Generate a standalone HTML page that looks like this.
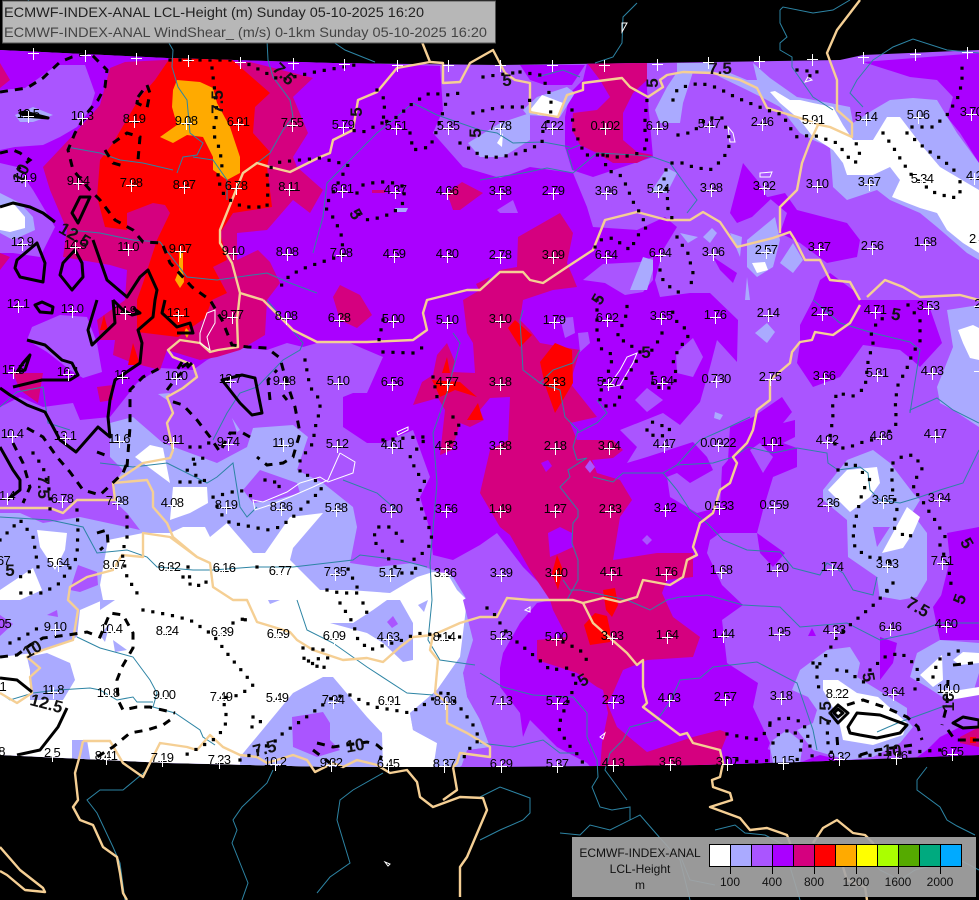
<!DOCTYPE html>
<html><head><meta charset="utf-8"><title>ECMWF-INDEX-ANAL LCL-Height</title>
<style>
html,body{margin:0;padding:0;background:#000;width:979px;height:900px;overflow:hidden}
svg{display:block;font-family:"Liberation Sans",sans-serif}
.v text{font-size:13px;letter-spacing:-.7px;fill:#000;text-anchor:middle}
.b text{font-size:17px;font-weight:bold;fill:#111;text-anchor:middle}
.s{fill:none;stroke:#000;stroke-width:3;stroke-linejoin:round}
.d{fill:none;stroke:#000;stroke-width:3;stroke-dasharray:8 7}
.o{fill:none;stroke:#000;stroke-width:3.2;stroke-dasharray:0 10;stroke-linecap:square}
.r{fill:none;stroke:#2d84a4;stroke-width:1}
.c{fill:none;stroke:#f5cf94;stroke-width:2.4;stroke-linejoin:round}
.w{fill:none;stroke:#fff;stroke-width:1}
.x polyline{fill:none;stroke:none;marker-start:url(#xm);marker-mid:url(#xm);marker-end:url(#xm)}
</style></head><body>
<svg width="979" height="900" viewBox="0 0 979 900" xmlns="http://www.w3.org/2000/svg">
<defs><clipPath id="st"><polygon points="0,50 167,58 333,63 500,65 650,63 840,60 863,55 979,50 979,755 800,762 700,765 500,767 333,767 167,763 0,755"/></clipPath>
<marker id="xm" markerUnits="userSpaceOnUse" markerWidth="16" markerHeight="16" refX="8" refY="8" orient="0" overflow="visible"><path shape-rendering="crispEdges" d="M3 8.5h11M8.5 3v12" fill="none" stroke="#fff" stroke-width="1"/></marker>
</defs>
<rect width="979" height="900" fill="#000"/>
<g clip-path="url(#st)">
<rect width="979" height="900" fill="#aa55ff"/>
<!-- dark purple -->
<g fill="#aa00ff">
<polygon points="0,50 440,66 443,110 433,133 463,167 500,178 530,167 573,173 587,207 593,227 637,230 665,217 677,227 663,250 655,280 660,297 690,293 710,293 738,320 737,362 717,340 710,367 700,402 680,425 663,413 620,430 637,447 627,463 647,457 693,442 707,457 713,470 690,483 677,473 667,477 670,497 697,513 720,507 722,467 728,460 730,427 753,417 782,397 792,412 783,423 795,420 795,437 783,443 797,448 797,467 773,477 763,510 757,533 720,533 710,540 707,553 722,585 743,605 722,620 727,663 758,683 753,707 770,743 760,770 593,770 587,763 557,747 530,720 523,737 520,713 497,683 503,653 520,623 537,603 552,600 543,587 523,567 497,533 480,545 453,560 433,555 430,530 420,497 430,477 413,430 383,443 367,443 343,427 343,397 353,393 367,393 383,357 350,343 317,343 303,347 287,343 267,350 233,347 207,360 193,370 160,368 137,383 110,417 80,420 73,403 43,407 20,397 0,407"/>
<polygon points="587,63 647,63 647,90 653,157 593,177 572,170 565,147 565,117 570,93 583,80"/>
<polygon points="520,65 585,65 572,85 545,85 530,80"/>
<polygon points="713,257 737,273 733,283 720,270"/>
<polygon points="863,62 910,77 937,80 953,97 947,117 960,133 979,163 979,53"/>
<polygon points="730,213 743,163 757,180 767,197 773,197 752,217 737,223"/>
<polygon points="768,197 785,193 797,210 847,223 860,240 857,257 827,263 800,243 780,233 787,213"/>
<polygon points="820,280 830,273 857,293 860,300 927,300 942,343 920,367 910,358 900,350 863,345 840,377 813,387 797,363 800,343 800,325 813,300"/>
<polygon points="947,533 979,527 979,600 940,600 950,560"/>
<polygon points="933,607 947,587 979,580 979,640 940,640"/>
<polygon points="880,637 897,643 893,663 880,680"/>
<polygon points="757,533 785,553 773,567 760,553"/>
<polygon points="940,737 960,727 979,727 979,760 913,760 927,750"/>
<polygon points="727,733 770,750 770,770 720,770"/>
<polygon points="812,628 816,636 808,636"/>
<polygon points="820,755 850,762 780,770"/>
</g>
<!-- magenta -->
<g fill="#d5007f">
<polygon points="110,68 125,62 165,60 250,62 313,78 293,97 308,133 293,157 297,167 323,190 310,213 293,200 267,230 237,233 237,260 258,250 270,262 280,283 267,300 265,335 240,350 217,357 200,360 167,350 160,370 133,363 113,355 115,340 100,340 97,320 125,300 127,270 110,265 63,257 67,230 50,190 43,167 75,133 100,105"/>
<polygon points="97,387 113,385 113,400 100,402"/>
<polygon points="0,63 10,80 0,88"/>
<polygon points="13,373 43,373 38,403 20,390"/>
<polygon points="0,253 10,257 0,270"/>
<polygon points="480,290 487,283 500,270 517,267 518,237 560,213 573,233 567,263 573,277 577,287 553,290 523,300 520,320 530,330 540,343 580,350 570,383 597,417 570,423 577,440 613,440 623,450 613,458 592,460 597,473 620,480 632,500 620,517 613,560 657,553 693,553 693,577 667,580 662,593 673,617 700,637 693,657 647,660 623,670 613,693 607,703 617,727 647,752 693,737 720,730 728,733 720,753 727,770 600,770 602,743 608,713 603,690 597,687 577,673 537,660 537,640 567,637 553,610 550,600 530,570 510,535 500,527 480,493 490,450 508,440 510,397 490,398 480,410 470,395 475,373 473,343 467,333 463,300"/>
<polygon points="447,343 455,362 452,372 475,373 483,388 478,405 484,420 470,427 460,423 452,450 440,455 445,410 438,398 413,405 422,382 433,375 437,355"/>
<polygon points="587,63 647,63 647,80 633,93 623,113 623,140 637,152 653,155 637,163 613,163 597,153 580,145 572,130 573,113 597,110 610,97 600,80"/>
<polygon points="447,193 462,182 483,193 460,210 453,210"/>
<polygon points="333,297 340,285 360,295 372,315 357,328 340,320"/>
<polygon points="372,190 385,190 385,193 372,193"/>
<polygon points="476,284 490,277 480,292"/>
<polygon points="960,737 979,727 979,747 960,743"/>
</g>
<!-- dark pockets above magenta -->
<g fill="#aa00ff">
<polygon points="548,533 560,527 572,533 573,547 560,553 550,557"/>
<polygon points="541,463 548,460 552,466 546,472"/>
</g>
<!-- red -->
<g fill="#f00">
<polygon points="170,58 230,58 270,93 255,107 253,133 270,152 267,167 272,207 233,213 220,233 227,260 213,267 227,293 212,300 205,318 178,337 137,332 137,300 143,283 157,240 170,213 165,205 153,203 127,213 127,230 105,227 97,197 100,160 113,143 140,97 155,80"/>
<polygon points="128,365 133,343 140,365"/>
<polygon points="100,330 104,315 108,330"/>
<polygon points="508,328 515,320 532,335 520,347"/>
<polygon points="540,362 555,343 572,350 573,383 555,413 545,385"/>
<polygon points="442,373 447,357 450,373"/>
<polygon points="432,380 460,382 477,397 455,390 440,397"/>
<polygon points="467,420 478,403 483,420"/>
<polygon points="552,573 557,555 563,570 558,590"/>
<polygon points="603,590 615,588 618,605 612,617 606,610"/>
<polygon points="584,625 595,613 607,616 610,630 610,642 590,645"/>
<polygon points="970,737 976,737 976,743 970,743"/>
</g>
<!-- orange -->
<g fill="#ffaa00">
<polygon points="177,80 200,82 213,88 217,103 230,127 240,157 240,173 227,180 213,170 213,157 203,137 187,135 173,143 160,137 177,125 172,107 173,90"/>
<polygon points="179,252 183,252 183,270 184,282 180,288 175,280 179,270"/>
<polygon points="186,328 190,332 187,338 184,333"/>
</g>
<!-- mid pockets -->
<g fill="#aa55ff">
<polygon points="0,90 25,88 57,65 85,65 95,93 90,110 77,127 60,137 43,145 15,147 0,150"/>
<polygon points="0,163 17,167 33,190 55,227 40,257 13,253 0,253"/>
<polygon points="32,327 60,315 87,317 97,343 102,372 83,378 70,370 47,352 27,340"/>
<polygon points="497,210 513,200 518,213 500,213"/>
<polygon points="590,207 603,187 613,197 610,217 593,220"/>
<polygon points="583,280 603,264 640,262 653,257 653,280 643,292 625,295 605,283"/>
<polygon points="560,318 573,317 575,333 565,338"/>
<polygon points="578,333 588,332 590,343 580,352"/>
<polygon points="676,353 693,338 703,357 693,377 677,373"/>
<polygon points="635,400 647,388 663,400 647,412"/>
<polygon points="750,450 763,473 773,457 760,443"/>
<polygon points="585,467 590,460 595,467 590,473"/>
<polygon points="642,540 647,535 652,540 647,545"/>
</g>
<!-- light -->
<g fill="#aaaaff">
<polygon points="0,513 20,513 43,523 80,517 140,530 127,513 113,500 115,483 123,470 110,457 110,423 133,417 163,443 217,463 247,447 253,428 293,425 308,437 297,470 323,483 353,507 357,527 350,563 377,567 413,563 453,577 467,600 473,627 473,650 463,673 467,697 480,720 490,747 467,750 460,770 0,770"/>
<polygon points="15,115 33,107 53,115 33,122 20,122"/>
<polygon points="0,193 20,203 33,217 35,230 13,240 0,233"/>
<polygon points="713,72 730,73 747,80 757,80 753,63 770,78 797,97 830,103 850,107 853,123 873,110 890,100 913,98 937,100 957,133 979,163 979,260 967,253 937,227 920,213 890,200 877,190 847,200 833,187 830,147 813,140 800,133 780,107 767,100 747,90 720,77"/>
<polygon points="655,110 667,87 677,72 677,63 713,63 713,72 693,72 683,103 680,123 660,123"/>
<polygon points="523,110 537,97 567,87 575,93 560,117 527,115"/>
<polygon points="468,143 500,123 530,113 530,140 503,157 480,157"/>
<polygon points="650,193 667,168 677,173 667,193"/>
<polygon points="680,233 698,237 688,243"/>
<polygon points="703,237 712,228 717,233 710,243"/>
<polygon points="730,233 742,237 740,257"/>
<polygon points="747,240 775,217 780,240 773,267 757,277 747,267"/>
<polygon points="780,263 793,243 803,260 793,273"/>
<polygon points="630,290 643,257 653,260 653,270 647,290"/>
<polygon points="745,300 747,277 750,300"/>
<polygon points="937,387 953,347 947,310 979,305 979,427 953,410 940,403"/>
<polygon points="755,333 767,323 775,332 767,343"/>
<polygon points="823,490 847,460 873,450 890,463 913,493 920,500 912,513 927,533 927,580 917,597 900,600 883,597 880,600 877,577 848,557 847,520 823,500"/>
<polygon points="792,690 800,670 827,650 850,647 860,663 857,677 883,693 907,708 907,720 913,727 900,743 873,757 847,760 813,750 797,730 813,723 817,710 808,697"/>
<polygon points="770,747 773,740 787,730 803,743 800,763 773,763"/>
<polygon points="910,677 917,653 940,640 979,643 979,673 973,693 953,690 947,700 927,687"/>
<polygon points="715,412 723,415 720,420 714,418"/>
<polygon points="395,208 408,208 406,212 396,212"/>
<polygon points="158,394 170,393 167,400"/>
<polygon points="232,418 240,430 237,432"/>
</g>
<!-- white -->
<g fill="#fff">
<polygon points="0,657 33,653 77,637 80,610 103,600 100,585 108,540 143,533 170,533 183,527 205,527 210,537 227,523 253,553 265,553 290,517 323,513 293,548 290,560 320,590 350,590 390,593 417,577 433,572 447,573 457,590 467,600 463,633 460,657 437,690 410,713 413,730 437,743 433,770 0,770"/>
<polygon points="770,92 775,91 790,100 800,100 813,103 833,107 843,125 853,140 873,140 887,117 900,117 923,147 940,167 979,190 979,253 963,243 947,230 937,213 920,208 907,203 892,197 900,180 890,167 873,175 847,175 843,163 833,150 813,137 800,120 780,103"/>
<polygon points="530,110 542,95 550,98 563,103 557,117 538,115"/>
<polygon points="497,143 503,133 502,147"/>
<polygon points="752,263 765,262 768,270 757,273"/>
<polygon points="958,330 973,325 979,328 979,360 970,358 963,343"/>
<polygon points="828,490 847,470 877,467 880,483 870,497 850,512"/>
<polygon points="882,553 907,507 920,517 913,533 903,548"/>
<polygon points="823,680 838,680 857,693 878,697 907,723 903,735 873,745 843,740 838,717 823,690"/>
<polygon points="920,675 942,655 943,680 933,687"/>
<polygon points="953,660 963,652 979,653 979,663 960,665"/>
<polygon points="938,690 960,690 979,687 979,695 950,700"/>
<polygon points="0,207 13,203 25,217 25,228 10,232 0,230"/>
<polygon points="135,457 150,445 163,448 170,483 143,463"/>
<polygon points="173,487 207,487 208,503 190,513 170,520"/>
<polygon points="37,530 67,533 65,550 55,570 40,547"/>
<polygon points="0,590 33,568 42,590 20,600 0,605"/>
</g>
<!-- patches on white -->
<g fill="#aaaaff">
<polygon points="0,600 68,600 77,610 73,640 43,650 27,653 0,657"/>
<polygon points="27,657 47,653 70,663 75,680 63,700 30,700 30,670"/>
<polygon points="330,623 353,623 373,610 387,600 400,600 413,623 413,660 403,662 383,643 367,633"/>
<polygon points="240,757 293,693 323,677 333,677 367,717 382,733 383,770 240,770"/>
<polygon points="72,740 87,740 92,770 72,770"/>
<polygon points="100,635 110,623 105,642"/>
<polygon points="113,640 127,650 115,652"/>
<polygon points="410,713 437,690 460,657 467,697 480,720 490,747 467,750 460,770 437,770 437,743 413,730"/>
<polygon points="100,600 115,600 100,610"/>
<polygon points="268,600 280,600 270,604"/>
<polygon points="418,605 428,600 424,612"/>
</g>
<g fill="#aa55ff">
<polygon points="243,490 260,470 297,483 300,493 275,500 253,503"/>
<polygon points="70,590 78,565 97,572 98,585 80,592"/>
<polygon points="292,717 323,712 330,723 330,740 340,750 317,757 293,747"/>
<polygon points="0,615 13,624 0,636"/>
<polygon points="387,622 393,616 398,624 392,628"/>
<polygon points="873,527 890,527 877,547"/>
<polygon points="463,600 480,590 500,600 500,770 455,770 490,747 480,720 463,673 473,640"/>
<polygon points="47,615 57,610 58,617" />
</g>
</g>

<!-- rivers -->
<g class="r">
<polyline points="163,33 173,50 172,67 178,87 187,100 190,133 203,143 197,155 183,157 177,173"/>
<polyline points="267,40 268,60 273,77 290,100 293,117 283,130 270,153 257,163"/>
<polyline points="413,103 437,115 460,123 480,130 497,133 513,143 543,142 570,147"/>
<polyline points="413,103 393,120 377,133 350,160 327,183 323,217 313,253"/>
<polyline points="193,157 213,160 227,180 227,200"/>
<polyline points="67,147 100,153 120,160 143,163 173,170"/>
<polyline points="70,230 100,233 133,240 160,242 187,277 217,280 267,273 290,283 317,293"/>
<polyline points="480,180 523,173 547,168 573,173 597,153 637,155 653,157 670,163 687,187 697,200 687,213"/>
<polyline points="580,145 567,150 573,170"/>
<polyline points="637,3 623,17 622,43 613,57 595,63"/>
<polyline points="780,10 783,7 813,13 833,10 850,0"/>
<polyline points="780,10 780,23 787,37 780,43 780,50 792,57 792,67 813,97 833,110"/>
<polyline points="979,53 947,50 913,39 893,47 873,60 857,80 850,93 863,107"/>
<polyline points="537,77 563,70 580,77"/>
<polyline points="523,310 520,320 523,370 540,383 560,390 565,417 578,430 573,447 577,460 587,458 568,470 570,477 560,487 578,510 578,517 573,523 572,543 578,560 578,580 567,600"/>
<polyline points="540,383 553,370 573,363 580,350"/>
<polyline points="597,400 607,413 597,423 577,433"/>
<polyline points="593,477 613,482 623,473 663,473 677,465 713,463 733,457 748,447 773,453 797,448 827,453 828,463 838,470 860,467 868,473 870,490 880,500 900,503 920,497 940,490 963,483 979,450"/>
<polyline points="677,465 693,447 700,440 727,428 750,417"/>
<polyline points="663,473 677,490 690,510 707,523 723,540 747,550 780,552 793,568 820,575 827,563 843,573 853,590 873,595 877,577"/>
<polyline points="910,413 910,410 937,398 953,410 979,423"/>
<polyline points="910,413 920,350 910,342 873,333 840,323 813,300"/>
<polyline points="480,673 503,687 533,695 573,697 587,713 587,737 597,760 598,777 592,787 600,807 612,810 630,807 630,820"/>
<polyline points="563,580 570,590 580,590 627,600 650,610 667,600 680,597 707,595 743,605 780,607 800,627 847,623 880,640 913,633 940,623 979,623"/>
<polyline points="630,727 623,740 610,753 605,770 627,800"/>
<polyline points="630,727 657,720 670,702 680,680 700,678 713,667 757,662 797,683 813,730 817,750"/>
<polyline points="877,732 900,722 928,712 947,705"/>
<polyline points="480,743 513,747 543,740 560,753 580,753"/>
<polyline points="927,767 917,780 917,790 940,807 947,820 957,826 975,835"/>
<polyline points="480,797 500,787 530,798 530,813 523,820 500,830 480,840"/>
<polyline points="273,770 267,783 242,807 233,820 237,830 232,843 240,863 248,883 242,900"/>
<polyline points="383,773 353,790 340,800 337,820 343,840 350,863 330,877 317,893"/>
<polyline points="147,770 123,790 100,790 87,800 97,813 113,847 120,863 125,900"/>
<polyline points="297,600 307,630 333,643 367,667 407,693 433,695"/>
<polyline points="77,637 100,648 133,657 150,680 157,693 153,707 175,713 200,730 203,737 215,745"/>
<polyline points="0,693 10,700 33,693 58,690 90,688 100,690 117,700 133,697 137,702 153,702"/>
<polyline points="0,407 17,392 43,387 48,423 70,430"/>
<polyline points="100,463 133,467 167,463 207,483 217,477 233,463 240,507 247,517 257,507"/>
<polyline points="213,440 227,413 240,393 257,387 283,360 300,350 303,343 267,300"/>
<polyline points="343,480 377,493 400,513"/>
<polyline points="453,333 460,343 447,393 433,433 437,483 430,563 432,600 428,640 440,660 475,665"/>
<polyline points="0,517 50,520 83,527 97,553 127,550 147,557 157,567 193,570 213,570 253,567 293,567 353,560 360,555 400,560 427,567"/>
<polyline points="28,0 40,12 100,15 125,40 150,40"/>
<polyline points="320,33 345,50 375,62"/>
<polyline points="715,830 735,825 745,833 765,835 790,848 785,850 800,900"/>
<polyline points="560,833 580,835 590,825 610,830 640,815 660,838 680,860 690,900"/>
<polyline points="860,850 880,870 900,880 915,870 935,865 960,860 979,870"/>
<polyline points="715,885 690,880 680,855"/>
</g>
<!-- borders -->
<g class="c">
<polyline points="420,37 430,62 397,68 377,92 358,100 353,130 333,140 330,153 320,157 290,172 270,167 257,163 243,173 232,200 220,230 220,243 232,263 240,293 237,320 238,347 218,350 210,352 200,343 180,340 168,350 173,357 193,365 197,377 183,388 167,397 173,413 167,423 173,450 170,458 143,463 113,483 115,500 77,500 63,513 50,508 0,508"/>
<polyline points="430,62 443,63 443,83 460,82 470,63 493,50 505,73 515,80 530,83 530,112 558,117 567,95 583,90 583,83 622,78 630,87 648,97 663,87 660,80 667,75 683,72 713,73 740,80 757,88 767,108 800,118 820,125 830,127 852,137 852,123 837,110 837,80 827,53 837,30 860,0"/>
<polyline points="263,300 293,330 317,342 367,342 413,340 427,330 423,313 427,300 467,290 480,290 500,272 523,272 530,280 543,283 567,267 593,250 605,220 637,212 667,220 690,220 703,212 720,222 737,247 773,238 790,232 795,240 805,260 820,260 830,280 850,282 860,300"/>
<polyline points="240,293 263,300"/>
<polyline points="867,297 885,280 903,287 920,297 960,295 979,300"/>
<polyline points="780,233 780,207 797,190 802,163 810,142 818,125"/>
<polyline points="860,305 850,323 833,335 815,332 812,340 800,342 792,352 790,363 770,380 770,400 757,410 753,430 747,443 733,457 737,463 730,483 720,490 713,513 700,523 693,547 697,555 687,560 683,577 670,585 643,580 637,597 620,602 603,598 583,603 573,600 557,600 530,600 507,598 497,617 480,617 460,623 433,635 413,637 400,647 383,662 367,658 343,660 313,650 297,640 290,632 257,622 247,600 233,600 213,587 210,563 197,557 170,537 143,533 143,557 122,555 113,570 87,577 70,587 68,600 78,610 73,640 43,650 27,657 40,668 30,677 32,693 17,703 0,693"/>
<polyline points="113,483 147,480 153,492 153,507 167,523 173,537 197,557"/>
<polyline points="83,741 110,741 123,763 143,777 160,743 187,747 197,750 210,735 223,747 240,755 257,757 267,763 293,755 307,760 315,772 333,763 343,767 357,760 377,765 390,773 407,770 417,782 420,797 433,807 460,797 483,798 487,810 467,857 460,867 460,897"/>
<polyline points="83,741 80,755 75,773 78,800 73,807 80,820 93,825 103,847 117,857 120,873 123,893 127,900"/>
<polyline points="0,847 20,870 43,888 45,892 25,890 13,880 7,875 0,871"/>
<polyline points="447,713 447,723 467,733 490,747 490,757 460,753 457,763 453,767 457,790 443,800"/>
<polyline points="433,635 430,650 438,660 435,693 447,703 447,713"/>
<polyline points="583,603 593,623 627,653 637,665 643,660 643,687 647,703 643,707 680,735 687,733 693,743 720,750 723,763 720,777 712,780 713,787 730,793 732,800 710,807 740,818 750,830 767,828 787,835 790,843 795,865"/>
<polyline points="813,843 823,828 837,820 853,833 865,835 873,843 876,850"/>
<polyline points="843,867 847,880 865,887 867,900"/>
</g>
<g class="w">
<polyline points="340,453 355,462 353,473 328,482 320,477 300,483 287,492 263,502 253,500 255,510 270,505 290,497 313,487 328,480 340,453"/>
<polygon points="200,333 207,313 215,310 215,323 207,337 210,350 200,343"/>
<polygon points="397,432 408,427 408,430 398,435"/>
<polygon points="620,370 627,357 637,353 633,363 627,373 620,385 608,387"/>
<polygon points="760,173 772,172 770,177 760,177"/>
<polygon points="728,127 733,133 735,142 730,142"/>
<polygon points="622,23 627,23 622,32"/>
<polygon points="808,77 812,80 805,82"/>
<polygon points="525,610 530,607 530,612"/>
<polygon points="600,737 605,733 603,739"/>
<polygon points="385,862 390,864 388,866"/>
</g>
<!-- contours -->
<g clip-path="url(#st)">
<g class="d">
<polyline points="0,92 27,88 43,78 60,62 72,57 90,53 102,65 107,70 105,87 98,100 87,113 75,133 68,150 73,170 90,190 100,200 115,220 133,230 143,242 162,243 170,263 192,287 210,300 222,320 232,345 248,347 267,348 280,358 286,380 295,407 300,433 293,457 283,463 267,465 257,457"/>
<polyline points="250,437 243,433 230,433 220,452 210,437 197,420 183,405 167,400"/>
<polygon points="138,97 147,85 150,93 147,108 137,103"/>
<polyline points="113,143 127,133 140,137 138,160"/>
<polyline points="105,150 113,163 127,167"/>
<polyline points="0,153 13,150 20,153 30,160 17,170"/>
<polyline points="127,467 130,427 130,390 143,377 160,368"/>
<polyline points="167,390 177,377 192,363"/>
<polyline points="182,362 177,370 190,362"/>
<polyline points="27,428 43,437 57,457 70,472 83,490 100,495 123,473 127,463"/>
<polyline points="13,443 23,463 30,487 23,503"/>
<polyline points="270,400 268,380 277,370"/>
<polyline points="283,395 287,400"/>
<polyline points="97,533 107,530 108,543 100,550"/>
<polyline points="97,452 105,455 103,458"/>
<polyline points="0,657 17,655 30,645 43,638 68,635 87,632 100,637 110,613 123,615 133,633 133,648 122,667 117,680 118,700 123,710 137,707 150,707 175,713"/>
<polyline points="170,720 163,725 147,730 130,733 113,747 97,757"/>
<polyline points="317,743 333,747 367,742 377,745 383,750 380,760"/>
<polyline points="313,750 330,763"/>
<polyline points="847,705 863,700 887,708 907,717 918,727 922,740"/>
<polyline points="837,737 838,750"/>
<polyline points="860,755 877,750 913,745"/>
<polyline points="948,680 947,705 942,725"/>
<polyline points="948,730 955,740 979,740"/>
<polyline points="953,665 973,663"/>
</g>
<g class="s">
<polyline points="0,207 13,203 30,207 43,213 55,222"/>
<polygon points="17,260 37,243 45,263 43,282 20,277 15,268"/>
<polygon points="80,197 90,197 78,223 72,213"/>
<polygon points="75,250 82,263 83,277 72,290 60,275 63,263"/>
<polyline points="93,240 100,260 107,280 127,297 140,277 148,270 157,290 155,300 153,317 138,330 142,343 140,363 115,380 110,400 108,417 110,437 98,427 76,452 60,440 45,412 27,405 10,395 0,388"/>
<polyline points="97,300 88,330 92,345 115,323 113,300"/>
<polyline points="113,300 123,310 132,315 140,313 133,308"/>
<polyline points="165,300 162,313 177,327 190,323 193,333 177,333"/>
<polygon points="35,305 42,302 53,307 52,313 40,312"/>
<polyline points="27,340 45,345 62,360 72,363 78,375 70,380 42,380 13,387"/>
<polygon points="23,363 30,355 25,370 17,372"/>
<polygon points="222,380 242,375 255,378 262,413 252,415 240,403"/>
<polyline points="0,447 13,470 20,480 20,490 7,500"/>
<polyline points="0,678 17,680 32,692"/>
<polyline points="67,708 58,727 40,750 17,755"/>
<polygon points="857,713 880,715 907,725 900,733 877,738 860,735 850,733 848,727"/>
<polygon points="830,713 838,705 848,713 838,723"/>
<polygon points="834,713 838,709 843,713 838,717"/>
<polygon points="953,723 963,717 979,720 979,727 963,728"/>
<polygon points="48,118 25,116 20,113 25,112" fill="#000"/>
</g>
<g class="o">
<polyline points="170,60 240,60 280,80 315,72 355,65"/>
<polyline points="212,68 215,93 217,113 213,133 220,150 222,167 217,177 223,193 230,200 243,207 267,207 268,190 267,170 280,162 320,158 340,163 348,165 325,207 335,220 342,237 343,255 307,267 290,275 280,287"/>
<polyline points="357,193 363,185 377,182 390,182 405,187 403,203 393,213 378,218 368,220 357,213"/>
<polyline points="377,90 385,100 383,123 397,117 413,103 430,93 447,95 460,93"/>
<polyline points="410,133 413,150 430,147 437,130 447,100"/>
<polyline points="382,123 363,132 350,130"/>
<polyline points="473,113 500,107 523,107 530,100"/>
<polyline points="460,143 480,155 490,158 513,155 532,148 542,143 543,130"/>
<polyline points="483,77 497,75 513,73"/>
<polyline points="520,72 540,75 548,88 552,107 548,122"/>
<polyline points="572,110 573,128 585,155 603,155 613,157 623,157 643,152 648,143 645,137 645,118 647,100"/>
<polyline points="603,155 607,170 620,175 625,183 629,192 632,200 640,213 647,227 640,232 630,250 613,238 600,240 593,250"/>
<polyline points="673,100 677,90 683,87 700,83 718,88 735,97 747,102 767,110 783,115 788,125 797,137 813,135 837,143 848,157 855,163 860,155 855,140"/>
<polyline points="678,135 693,132 707,118 722,118 728,133 730,143 727,152 722,160 710,170 693,167 683,163 670,163 663,175 667,190 668,210 673,220"/>
<polyline points="883,133 893,147 903,163 913,177 933,192 952,198 960,195 960,180"/>
<polyline points="907,133 927,150 943,160 957,173"/>
<polyline points="912,127 933,127 947,115 952,107 957,100 962,83 962,67"/>
<polyline points="797,70 818,72 805,78"/>
<polyline points="677,237 680,243 687,250 693,273 690,290"/>
<polyline points="660,270 663,280 670,287 680,293"/>
<polyline points="597,300 597,332 600,348 613,355 610,368 603,383 600,395 600,403 610,408 618,403 623,383 627,377 637,360 640,352 627,343 617,337 623,323 627,313 627,305"/>
<polyline points="652,373 653,387 670,388 677,378 673,360 680,347 688,338 687,330 677,322 673,313 670,305"/>
<polyline points="662,333 657,343 647,357"/>
<polygon points="647,430 652,422 660,425 670,428 668,433 660,437 652,435"/>
<polyline points="908,305 920,320 920,343 913,352 910,360 907,368 897,387 895,410 897,420 895,427 880,438 863,442 847,448 838,448 830,437 833,417 832,408 837,393 853,396 865,388 868,362 873,343 870,337 878,320 888,317"/>
<polyline points="838,470 848,463 855,465 870,480 863,490 857,513 853,533 855,548 868,557 880,558 897,565"/>
<polyline points="893,583 883,597"/>
<polyline points="893,463 903,456 913,455 923,467 915,480 913,490 920,497 928,510 935,520 947,540"/>
<polyline points="892,470 892,487 897,510 893,527 907,538 915,533"/>
<polyline points="813,663 817,667 823,660 837,637 850,625 877,602 893,583"/>
<polyline points="817,667 817,680 820,693"/>
<polyline points="837,670 845,670 857,678 872,687"/>
<polyline points="870,670 885,657 900,653 908,658 917,667 918,680 913,695"/>
<polyline points="933,677 938,660 953,652 963,650"/>
<polyline points="770,723 783,717 803,722 808,737 813,760"/>
<polyline points="773,743 780,732 793,730 803,743 797,760"/>
<polyline points="828,723 827,740 833,757"/>
<polyline points="727,734 743,737 755,740 765,733 770,725"/>
<polyline points="727,758 750,762 775,760"/>
<polyline points="517,642 543,663 550,670 568,668 577,680 573,690 563,713 558,727 567,743 578,755 583,763"/>
<polyline points="563,642 580,650 590,665"/>
<polyline points="487,608 495,615 500,623 510,637"/>
<polyline points="860,756 940,750"/>
<polyline points="940,545 948,565 952,590"/>
<polyline points="305,360 310,387 320,400 320,410 315,428 313,443 300,460 300,473 313,477 322,490 310,500 293,517 280,527 267,530 243,525 230,523 220,513 213,497 240,490 253,497"/>
<polyline points="180,482 207,482 187,470 203,458 187,460"/>
<polyline points="190,447 203,447 213,440"/>
<polyline points="265,480 270,482 280,482 278,492"/>
<polyline points="383,352 413,353 430,343"/>
<polyline points="383,440 417,437 427,437 410,457 417,473 425,480 417,497 427,523 430,530 432,540 427,550 413,560 417,573 400,573 380,548 373,540 377,527 390,527 400,537 405,547"/>
<polyline points="433,377 437,397 440,403"/>
<polyline points="453,417 460,427 450,443"/>
<polyline points="383,320 378,345"/>
<polyline points="33,453 43,467 50,493 50,510"/>
<polyline points="77,510 78,527 77,557 60,583 43,593 17,593"/>
<polyline points="127,517 127,537 122,553 127,577 137,593"/>
<polyline points="0,540 20,520 33,537 38,567 20,577"/>
<polyline points="183,577 193,587 207,583 200,577"/>
<polyline points="257,567 253,573"/>
<polyline points="327,590 340,593 360,593 347,567"/>
<polyline points="143,610 170,615 190,620 213,635 230,657 247,677 253,685 240,695 223,698 227,720 223,730 213,740 200,747 190,753 180,757"/>
<polyline points="10,643 23,637 43,625"/>
<polyline points="233,623 248,617 240,625"/>
<polyline points="303,648 323,650 315,665 302,657 323,670 328,657"/>
<polyline points="340,603 353,623 358,640 370,650 378,647 403,640 413,635 422,633 447,637 460,637"/>
<polyline points="363,603 367,613 375,610"/>
<polyline points="253,717 252,727 263,720"/>
<polyline points="240,760 250,755 277,740 283,733 298,723 312,713 320,707 333,697 350,695 360,700 375,707 393,710 410,713 427,703 445,690 462,710 473,725 480,740 472,745 462,760"/>
<polyline points="188,567 190,580"/>
</g>
</g>
<!-- values -->
<g class="v">
<text x="28" y="118">12.5</text><text x="82" y="120">10.3</text><text x="134" y="123">8.19</text><text x="186" y="125">9.08</text><text x="238" y="126">6.91</text><text x="292" y="127">7.55</text><text x="343" y="129">5.79</text><text x="396" y="130">5.51</text><text x="448" y="130">5.35</text><text x="500" y="130">7.78</text><text x="552" y="130">4.22</text><text x="605" y="130">0.102</text><text x="657" y="130">6.19</text><text x="709" y="128">5.47</text><text x="762" y="126">2.46</text><text x="813" y="124">5.91</text><text x="866" y="121">5.14</text><text x="918" y="119">5.06</text><text x="971" y="116">3.70</text>
<text x="25" y="182">10.9</text><text x="78" y="185">9.64</text><text x="131" y="187">7.98</text><text x="184" y="189">8.97</text><text x="236" y="190">6.78</text><text x="289" y="191">8.11</text><text x="342" y="193">6.81</text><text x="395" y="194">4.37</text><text x="447" y="195">4.66</text><text x="500" y="195">3.58</text><text x="553" y="195">2.79</text><text x="606" y="195">3.96</text><text x="658" y="193">5.24</text><text x="711" y="192">3.98</text><text x="764" y="190">3.92</text><text x="817" y="188">3.10</text><text x="869" y="186">3.67</text><text x="922" y="183">5.34</text><text x="974" y="180">4.2</text>
<text x="22" y="246">12.9</text><text x="75" y="249">14.5</text><text x="128" y="251">11.0</text><text x="180" y="253">9.07</text><text x="233" y="255">9.10</text><text x="287" y="256">8.08</text><text x="341" y="257">7.08</text><text x="394" y="258">4.59</text><text x="447" y="258">4.30</text><text x="500" y="259">2.78</text><text x="553" y="259">3.09</text><text x="606" y="259">6.84</text><text x="660" y="257">6.94</text><text x="713" y="256">3.06</text><text x="766" y="254">2.57</text><text x="819" y="251">3.37</text><text x="872" y="250">2.56</text><text x="925" y="246">1.68</text><text x="977" y="243">2.4</text>
<text x="18" y="308">12.1</text><text x="72" y="313">13.0</text><text x="125" y="315">14.9</text><text x="178" y="317">13.1</text><text x="232" y="319">9.77</text><text x="286" y="320">8.08</text><text x="339" y="322">6.28</text><text x="393" y="323">5.00</text><text x="447" y="324">5.10</text><text x="500" y="323">3.10</text><text x="554" y="324">1.79</text><text x="607" y="322">6.92</text><text x="661" y="320">3.65</text><text x="715" y="319">1.76</text><text x="768" y="317">2.14</text><text x="822" y="316">2.75</text><text x="875" y="314">4.71</text><text x="928" y="310">3.53</text><text x="979" y="308">2.</text>
<text x="13" y="374">15.5</text><text x="68" y="376">16.1</text><text x="122" y="379">12.</text><text x="176" y="380">10.0</text><text x="230" y="383">12.7</text><text x="284" y="385">9.98</text><text x="338" y="385">5.10</text><text x="392" y="386">6.56</text><text x="447" y="386">4.77</text><text x="500" y="386">3.18</text><text x="554" y="386">2.33</text><text x="608" y="386">5.27</text><text x="662" y="385">5.84</text><text x="716" y="383">0.730</text><text x="770" y="381">2.75</text><text x="824" y="380">3.66</text><text x="877" y="377">5.81</text><text x="932" y="375">4.03</text>
<text x="12" y="438">10.4</text><text x="65" y="440">13.1</text><text x="119" y="443">11.6</text><text x="173" y="444">9.11</text><text x="228" y="446">9.74</text><text x="283" y="447">11.9</text><text x="337" y="448">5.12</text><text x="392" y="449">4.61</text><text x="446" y="450">4.33</text><text x="500" y="450">3.38</text><text x="555" y="450">2.18</text><text x="609" y="450">3.04</text><text x="664" y="448">4.47</text><text x="718" y="447">0.0922</text><text x="772" y="446">1.01</text><text x="827" y="444">4.92</text><text x="881" y="440">4.86</text><text x="935" y="438">4.17</text>
<text x="7" y="500">1.4</text><text x="62" y="503">6.78</text><text x="117" y="505">7.98</text><text x="172" y="507">4.08</text><text x="226" y="509">8.19</text><text x="281" y="511">8.86</text><text x="336" y="512">5.88</text><text x="391" y="513">6.20</text><text x="446" y="513">3.56</text><text x="500" y="513">1.49</text><text x="555" y="513">1.27</text><text x="610" y="513">2.83</text><text x="665" y="512">3.42</text><text x="719" y="510">0.533</text><text x="774" y="509">0.959</text><text x="828" y="507">2.36</text><text x="883" y="504">3.65</text><text x="939" y="502">3.94</text>
<text x="2" y="565">.67</text><text x="58" y="567">5.64</text><text x="114" y="569">8.07</text><text x="169" y="571">6.82</text><text x="224" y="572">6.16</text><text x="280" y="575">6.77</text><text x="335" y="576">7.35</text><text x="390" y="577">5.17</text><text x="445" y="577">3.36</text><text x="501" y="577">3.39</text><text x="556" y="577">3.40</text><text x="611" y="576">4.51</text><text x="666" y="576">1.76</text><text x="721" y="574">1.68</text><text x="777" y="572">1.20</text><text x="832" y="571">1.74</text><text x="887" y="568">3.93</text><text x="942" y="565">7.51</text>
<text x="3" y="628">.05</text><text x="55" y="631">9.10</text><text x="111" y="633">10.4</text><text x="167" y="635">8.24</text><text x="222" y="636">6.39</text><text x="278" y="638">6.59</text><text x="334" y="640">6.09</text><text x="388" y="641">4.63</text><text x="444" y="641">8.14</text><text x="501" y="640">5.23</text><text x="556" y="641">5.00</text><text x="612" y="640">3.93</text><text x="667" y="639">1.64</text><text x="723" y="638">1.44</text><text x="779" y="636">1.95</text><text x="834" y="634">4.33</text><text x="890" y="631">6.46</text><text x="946" y="628">4.60</text>
<text x="0" y="691">11</text><text x="53" y="694">11.8</text><text x="108" y="697">10.8</text><text x="164" y="699">9.00</text><text x="221" y="701">7.49</text><text x="277" y="702">5.49</text><text x="333" y="704">7.94</text><text x="389" y="705">6.91</text><text x="445" y="705">8.08</text><text x="501" y="705">7.13</text><text x="557" y="705">5.72</text><text x="613" y="704">2.73</text><text x="669" y="702">4.03</text><text x="725" y="701">2.57</text><text x="781" y="700">3.18</text><text x="837" y="698">8.22</text><text x="893" y="696">3.64</text><text x="948" y="693">10.0</text>
<text x="0" y="756">.8</text><text x="52" y="757">2.5</text><text x="106" y="760">8.41</text><text x="162" y="762">7.19</text><text x="219" y="764">7.23</text><text x="275" y="766">10.2</text><text x="331" y="767">9.82</text><text x="388" y="768">6.45</text><text x="444" y="768">8.37</text><text x="501" y="768">6.29</text><text x="557" y="768">5.37</text><text x="613" y="767">4.13</text><text x="670" y="766">3.56</text><text x="727" y="766">3.07</text><text x="783" y="765">1.15</text><text x="839" y="761">9.32</text><text x="896" y="760">7.96</text><text x="952" y="756">6.75</text>
</g>
<g class="b">
<text transform="translate(280,78) rotate(45)">7.5</text>
<text transform="translate(223,102) rotate(-90)">7.5</text>
<text transform="translate(362,112) rotate(-90)">5</text>
<text transform="translate(351,217) rotate(60)">5</text>
<text transform="translate(481,133) rotate(-90)">5</text>
<text transform="translate(26,176) rotate(-65)">10</text>
<text transform="translate(72,240) rotate(30)">12.5</text>
<text transform="translate(38,487) rotate(90)">7.5</text>
<text transform="translate(10,576)">5</text>
<text transform="translate(35,654) rotate(-30)">10</text>
<text transform="translate(45,709) rotate(15)">12.5</text>
<text transform="translate(266,754) rotate(-15)">7.5</text>
<text transform="translate(356,751) rotate(-10)">10</text>
<text transform="translate(507,86)">5</text>
<text transform="translate(658,83) rotate(-90)">5</text>
<text transform="translate(720,74)">7.5</text>
<text transform="translate(603,302) rotate(-60)">5</text>
<text transform="translate(895,320) rotate(10)">5</text>
<text transform="translate(646,358)">5</text>
<text transform="translate(962,546) rotate(60)">5</text>
<text transform="translate(915,612) rotate(30)">7.5</text>
<text transform="translate(965,601) rotate(-70)">5</text>
<text transform="translate(586,685) rotate(-30)">5</text>
<text transform="translate(863,678) rotate(80)">5</text>
<text transform="translate(954,702) rotate(-90)">10</text>
<text transform="translate(892,756)">10</text>
<text transform="translate(831,713) rotate(-90)">7.5</text>
</g>
<!-- crosses -->
<g class="x">
<polyline points="33,53 85,55 136,58 188,60 240,62 293,63 344,64 397,65 448,65 500,65 552,65 604,65 657,64 708,62 759,61 812,59 863,57 915,54 967,52"/>
<polyline points="28,116 82,118 134,121 186,123 238,124 292,125 343,127 396,128 448,128 500,128 552,128 605,128 657,128 709,126 762,124 813,122 866,119 918,117 971,114"/>
<polyline points="25,180 78,183 131,185 184,187 236,188 289,189 342,191 395,192 447,193 500,193 553,193 606,193 658,191 711,190 764,188 817,186 869,184 922,181 974,178"/>
<polyline points="22,244 75,247 128,249 180,251 233,253 287,254 341,255 394,256 447,256 500,257 553,257 606,257 660,255 713,254 766,252 819,249 872,248 925,244 977,241"/>
<polyline points="18,306 72,311 125,313 178,315 232,317 286,318 339,320 393,321 447,322 500,321 554,322 607,320 661,318 715,317 768,315 822,314 875,312 928,308 979,306"/>
<polyline points="13,372 68,374 122,377 176,378 230,381 284,383 338,383 392,384 447,384 500,384 554,384 608,384 662,383 716,381 770,379 824,378 877,375 932,373 979,371"/>
<polyline points="12,436 65,438 119,441 173,442 228,444 283,445 337,446 392,447 446,448 500,448 555,448 609,448 664,446 718,445 772,444 827,442 881,438 935,436"/>
<polyline points="7,498 62,501 117,503 172,505 226,507 281,509 336,510 391,511 446,511 500,511 555,511 610,511 665,510 719,508 774,507 828,505 883,502 939,500"/>
<polyline points="58,565 114,567 169,569 224,570 280,573 335,574 390,575 445,575 501,575 556,575 611,574 666,574 721,572 777,570 832,569 887,566 942,563"/>
<polyline points="55,629 111,631 167,633 222,634 278,636 334,638 388,639 444,639 501,638 556,639 612,638 667,637 723,636 779,634 834,632 890,629 946,626"/>
<polyline points="53,692 108,695 164,697 221,699 277,700 333,702 389,703 445,703 501,703 557,703 613,702 669,700 725,699 781,698 837,696 893,694 948,691"/>
<polyline points="52,755 106,758 162,760 219,762 275,764 331,765 388,766 444,766 501,766 557,766 613,765 670,764 727,764 783,763 839,759 896,758 952,754"/>
</g>
<!-- header -->
<rect x="2.5" y="1" width="493" height="42" fill="#b7b7b7" stroke="#555" stroke-width="1"/>
<text x="4" y="17" font-size="14" fill="#222" textLength="420" lengthAdjust="spacingAndGlyphs">ECMWF-INDEX-ANAL LCL-Height (m) Sunday 05-10-2025 16:20</text>
<text x="4" y="37" font-size="14" fill="#444" textLength="483" lengthAdjust="spacingAndGlyphs">ECMWF-INDEX-ANAL WindShear_ (m/s) 0-1km Sunday 05-10-2025 16:20</text>
<!-- legend -->
<rect x="572" y="837" width="404" height="60" fill="#a6a6a6" opacity=".92"/>
<g stroke="#000" stroke-width="1">
<rect x="709.5" y="844.5" width="21" height="22" fill="#fff"/><rect x="730.5" y="844.5" width="21" height="22" fill="#aaaaff"/><rect x="751.5" y="844.5" width="21" height="22" fill="#aa55ff"/><rect x="772.5" y="844.5" width="21" height="22" fill="#aa00ff"/><rect x="793.5" y="844.5" width="21" height="22" fill="#d5007f"/><rect x="814.5" y="844.5" width="21" height="22" fill="#f00"/><rect x="835.5" y="844.5" width="21" height="22" fill="#ffaa00"/><rect x="856.5" y="844.5" width="21" height="22" fill="#ff0"/><rect x="877.5" y="844.5" width="21" height="22" fill="#aaff00"/><rect x="898.5" y="844.5" width="21" height="22" fill="#55aa00"/><rect x="919.5" y="844.5" width="21" height="22" fill="#00aa7f"/><rect x="940.5" y="844.5" width="21" height="22" fill="#00aaff"/>
<path d="M730.5 867v7M772.5 867v7M814.5 867v7M856.5 867v7M898.5 867v7M940.5 867v7"/>
</g>
<g font-size="12" fill="#111" text-anchor="middle">
<text x="640" y="857">ECMWF-INDEX-ANAL</text><text x="640" y="873">LCL-Height</text><text x="640" y="889">m</text>
<text x="730" y="886">100</text><text x="772" y="886">400</text><text x="814" y="886">800</text><text x="856" y="886">1200</text><text x="898" y="886">1600</text><text x="940" y="886">2000</text>
</g>
</svg>
</body></html>
